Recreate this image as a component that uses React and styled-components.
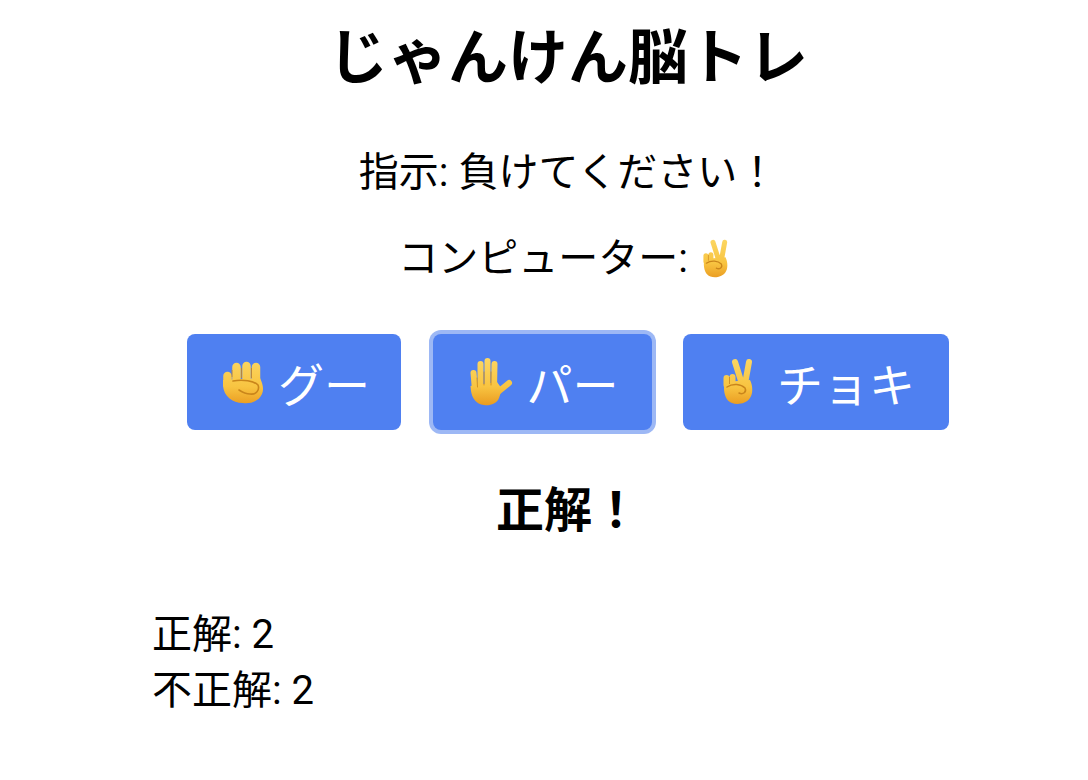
import React from "react";
import styled, { createGlobalStyle } from "styled-components";

const GlobalStyle = createGlobalStyle`
  html, body { margin: 0; padding: 0; background: #fff; }
  body { font-family: Roboto, "Noto Sans CJK JP", sans-serif; color: #000; }
`;

const Page = styled.div`
  width: 1088px;
  height: 780px;
  overflow: hidden;
  display: flex;
  flex-direction: column;
  align-items: center;
  padding: 21px 0 0 48px;
  box-sizing: border-box;
`;

const Title = styled.h1`
  margin: 0;
  font-size: 60px;
  line-height: 76px;
  font-weight: 700;
`;

const Line = styled.p`
  margin: ${(p) => p.$top}px 0 0;
  font-size: 40px;
  line-height: 48px;
  display: flex;
  align-items: center;
  gap: ${(p) => p.$gap || 0}px;
`;

const Buttons = styled.div`
  display: flex;
  margin-top: 51px;
`;

const Button = styled.button`
  height: 96px;
  width: ${(p) => p.$w}px;
  margin-left: ${(p) => p.$gap || 0}px;
  padding: 0;
  border: 0;
  border-radius: 8px;
  background: #4f80f1;
  color: #fff;
  font: 400 46px Roboto, "Noto Sans CJK JP", sans-serif;
  display: flex;
  align-items: center;
  justify-content: center;
  gap: 12px;
  box-shadow: ${(p) => (p.$focus ? "0 0 0 4px #9db8f5" : "none")};
`;

const Result = styled.div`
  margin-top: 51px;
  font-size: 48px;
  line-height: 60px;
  font-weight: 700;
`;

const Score = styled.div`
  align-self: flex-start;
  margin: 66px 0 0 104px;
  font-size: 40px;
  line-height: 56px;
`;

const SvgHand = styled.svg`
  width: ${(p) => p.$s}px;
  height: ${(p) => p.$s}px;
  flex: none;
`;

const edge = "#c9851b";

function SkinGradient() {
  return (
    <defs>
      <linearGradient id="skin" gradientUnits="userSpaceOnUse" x1="0" y1="0" x2="0" y2="48">
        <stop offset="0" stopColor="#fcd763" />
        <stop offset="0.6" stopColor="#f8c441" />
        <stop offset="1" stopColor="#e9991f" />
      </linearGradient>
    </defs>
  );
}

function Fist({ s = 48 }) {
  return (
    <SvgHand $s={s} viewBox="0 0 48 48">
      <SkinGradient />
      <path d="M5 22L42 20C45 26 46 32 44 36C41 43 33 46 25 45C14 45 6 38 5 28Z" fill="url(#skin)" />
      <g stroke="url(#skin)" strokeWidth="8.500" strokeLinecap="round" fill="none">
        <path d="M9.500 18v7M18.500 9v14M28.500 8v14M38 9v14" />
      </g>
      <path d="M14 12v7M23.500 10v10M33.500 10v10" stroke={edge} strokeWidth="0.8" fill="none" />
      <path d="M15 23C25 21 36 23 40 27C42 32 38 37 32 36C28 36 24 34 21 32" fill="none" stroke={edge} strokeWidth="1.600" strokeLinecap="round" />
    </SvgHand>
  );
}

function Palm({ s = 48 }) {
  return (
    <SvgHand $s={s} viewBox="0 0 48 48">
      <SkinGradient />
      <path d="M3.500 28L30 24L35 31L32 40C30 46 22 48 17 47C9 46 5 40 4 33Z" fill="url(#skin)" />
      <g stroke="url(#skin)" strokeWidth="6" strokeLinecap="round" fill="none">
        <path d="M6.500 15L8 32M13.500 6V28M20.500 3V28M27.500 6L27 30M31 34L42 25" />
      </g>
      <path d="M10 20l.5 9M17 14v13M24 14v13" stroke={edge} strokeWidth="0.8" fill="none" strokeLinecap="round" />
    </SvgHand>
  );
}

function Peace({ s = 48 }) {
  return (
    <SvgHand $s={s} viewBox="0 0 48 48">
      <SkinGradient />
      <path d="M8 24L33 22C36 28 36 36 33 40C29 46 20 47 15 45C9 43 7 36 7 30Z" fill="url(#skin)" />
      <g stroke="url(#skin)" strokeWidth="6" strokeLinecap="round" fill="none">
        <path d="M18 4L25 26M32 4L28 26M9.500 20V27M15.500 19V25" />
      </g>
      <path d="M12.500 19v7" stroke={edge} strokeWidth="0.8" fill="none" />
      <path d="M10 29C16 25 24 26 28 30C30 34 26 37 22 35" fill="none" stroke={edge} strokeWidth="1.500" strokeLinecap="round" />
    </SvgHand>
  );
}

export default function App() {
  return (
    <Page>
      <GlobalStyle />
      <Title>じゃんけん脳トレ</Title>
      <Line $top={52}>指示: 負けてください！</Line>
      <Line $top={38} $gap={10}>
        コンピューター:<Peace s={40} />
      </Line>
      <Buttons>
        <Button $w={214}><Fist />グー</Button>
        <Button $w={219} $gap={32} $focus><Palm />パー</Button>
        <Button $w={266} $gap={31}><Peace />チョキ</Button>
      </Buttons>
      <Result>正解！</Result>
      <Score>
        <div>正解: 2</div>
        <div>不正解: 2</div>
      </Score>
    </Page>
  );
}
